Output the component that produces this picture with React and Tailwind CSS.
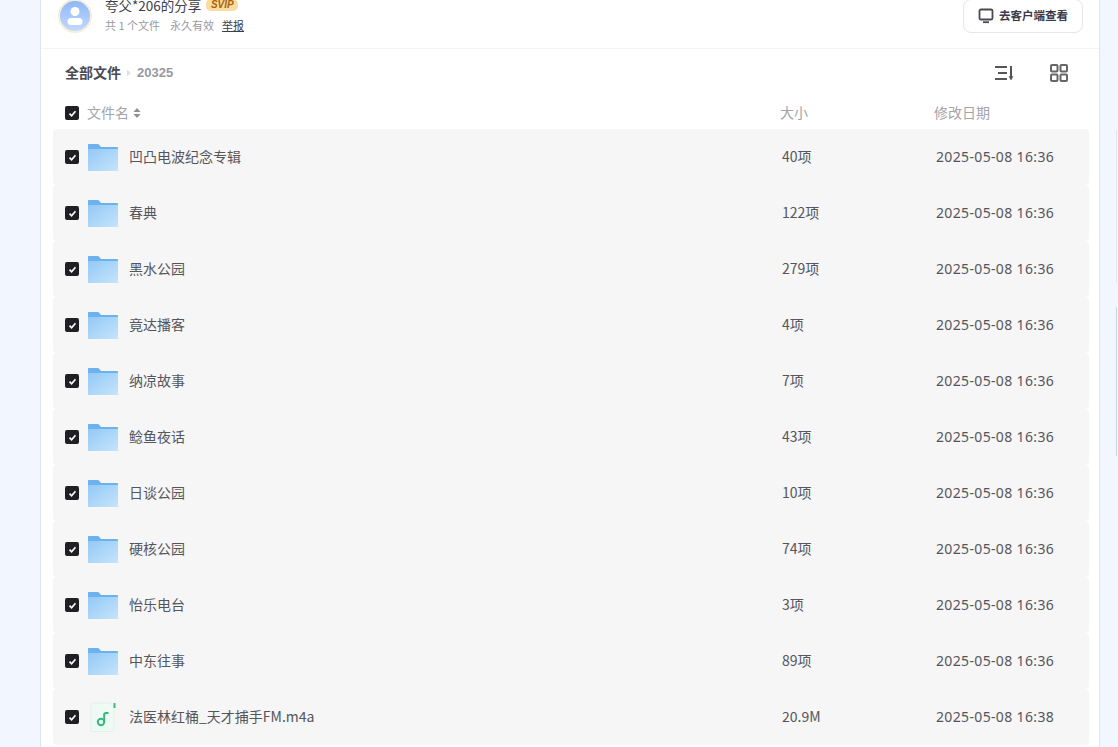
import React from "react";

const rows = [
  ["凹凸电波纪念专辑", "40项", "2025-05-08 16:36"],
  ["春典", "122项", "2025-05-08 16:36"],
  ["黑水公园", "279项", "2025-05-08 16:36"],
  ["竟达播客", "4项", "2025-05-08 16:36"],
  ["纳凉故事", "7项", "2025-05-08 16:36"],
  ["鲶鱼夜话", "43项", "2025-05-08 16:36"],
  ["日谈公园", "10项", "2025-05-08 16:36"],
  ["硬核公园", "74项", "2025-05-08 16:36"],
  ["怡乐电台", "3项", "2025-05-08 16:36"],
  ["中东往事", "89项", "2025-05-08 16:36"],
  ["法医林红桶_天才捕手FM.m4a", "20.9M", "2025-05-08 16:38", true],
];

function Check() {
  return (
    <span className="flex h-[14px] w-[14px] shrink-0 items-center justify-center rounded-[2px] bg-[#1f1f24]">
      <svg width="9" height="9" viewBox="0 0 9 9" fill="none">
        <path d="M1.500 4.700 3.600 6.800 7.500 2.200" stroke="#fff" strokeWidth="1.700" />
      </svg>
    </span>
  );
}

function Folder() {
  return (
    <svg width="30" height="27" viewBox="0 0 30 27" className="shrink-0">
      <defs>
        <linearGradient id="fg" x1="0" y1="0" x2="1" y2="1">
          <stop offset="0" stopColor="#93c9f5" />
          <stop offset="1" stopColor="#c6e4fc" />
        </linearGradient>
      </defs>
      <path d="M0 1C0 .4.4 0 1 0H9.500C10.500 0 11 .5 11.800 1.500L13 3H29C29.600 3 30 3.400 30 4V26C30 26.600 29.600 27 29 27H1C.4 27 0 26.600 0 26Z" fill="#6cb2ec" />
      <path d="M0 6C0 5.400.4 5 1 5H29C29.600 5 30 5.400 30 6V26C30 26.600 29.600 27 29 27H1C.4 27 0 26.600 0 26Z" fill="url(#fg)" />
    </svg>
  );
}

function Music() {
  return (
    <svg width="30" height="32" viewBox="0 0 30 32" className="shrink-0">
      <path d="M3 3.500C3 2.700 3.700 2 4.500 2H22L26 6V29C26 29.800 25.300 30.500 24.500 30.500H4.500C3.700 30.500 3 29.800 3 29Z" fill="#eefaf4" stroke="#dff2e8" />
      <rect x="25.500" y="2" width="2" height="5" fill="#3dbb7f" />
      <circle cx="13" cy="21" r="3.200" fill="none" stroke="#36b87c" strokeWidth="2" />
      <path d="M16.200 21V13.500C16.200 12.500 17 12 18 12H20.500" fill="none" stroke="#36b87c" strokeWidth="2" />
    </svg>
  );
}

export default function App() {
  return (
    <div className="relative h-[747px] w-[1118px] overflow-hidden bg-[#f2f6ff] font-['Noto_Sans_CJK_SC','Noto_Sans',sans-serif]">
      <div className="ml-[40px] h-[747px] w-[1060px] border-x border-[#dfe5ef] bg-white">
        <header className="flex h-[49px] items-center justify-between border-b border-[#f3f3f3] pl-[17px] pr-[16px]">
          <div className="-mt-[17px] flex items-center gap-[13px]">
            <div className="flex h-[34px] w-[34px] items-center justify-center rounded-full border-2 border-[#f5eeda] bg-gradient-to-b from-[#8fb8f8] to-[#c4d9fd]">
              <svg width="18" height="20" viewBox="0 0 18 20">
                <circle cx="9" cy="5.500" r="4.500" fill="#fff" />
                <rect x="1.500" y="12" width="15" height="7" rx="3.500" fill="#fff" />
              </svg>
            </div>
            <div className="-mt-[3px]">
              <div className="flex h-[22px] items-center gap-[5px]">
                <span className="text-[13.5px] leading-[22px] text-[#40404a]">夸父*206的分享</span>
                <span className="flex h-[12px] w-[32px] items-center justify-center rounded-[5px] bg-[#fbdc9e] font-['Liberation_Sans',sans-serif] text-[10px] font-bold italic leading-none text-[#a8620f]">SVIP</span>
              </div>
              <div className="flex h-[18px] items-center text-[11px] text-[#9a9aa2]">
                <span>共 1 个文件</span>
                <span className="ml-[10px]">永久有效</span>
                <span className="ml-[8px] text-[#3d3d4a] underline">举报</span>
              </div>
            </div>
          </div>
          <button className="-mt-[16px] flex h-[34px] w-[120px] items-center justify-center gap-[5px] rounded-[8px] border border-[#e6e6ea] bg-white text-[11.500px] font-semibold text-[#3a3a48]">
            <svg width="16" height="16" viewBox="0 0 16 16" fill="none" stroke="#4a4a4f" strokeWidth="1.800">
              <rect x="1.500" y="1.500" width="13" height="10" rx="1.500" />
              <path d="M5 14.200H11" />
            </svg>
            去客户端查看
          </button>
        </header>

        <div className="flex h-[48px] items-center justify-between pl-[24px] pr-[31px]">
          <div className="flex items-center">
            <span className="relative -top-[1px] text-[14px] font-semibold text-[#4a4a52]">全部文件</span>
            <svg width="6" height="8" viewBox="0 0 6 8" className="mx-[5px]"><path d="M1 0.500 5 4 1 7.500Z" fill="#e2e2e4" /></svg>
            <span className="font-['Liberation_Sans',sans-serif] text-[13px] font-bold text-[#98989e]">20325</span>
          </div>
          <div className="flex items-center gap-[36px]">
            <svg width="20" height="18" viewBox="0 0 20 18" fill="none" stroke="#55555a" strokeWidth="2">
              <path d="M1 3H13M4 9H13M1 15H13" />
              <path d="M17 2V15" />
              <path d="M15 12.500 17 16 19 12.500Z" fill="#55555a" strokeWidth="0.500" />
            </svg>
            <svg width="18" height="18" viewBox="0 0 18 18" fill="none" stroke="#666" strokeWidth="2">
              <rect x="1" y="1" width="6.500" height="6.500" rx="1" />
              <rect x="10.500" y="1" width="6.500" height="6.500" rx="1" />
              <rect x="1" y="10.500" width="6.500" height="6.500" rx="1" />
              <rect x="10.500" y="10.500" width="6.500" height="6.500" rx="1" />
            </svg>
          </div>
        </div>

        <div className="flex h-[32px] items-center pl-[24px] text-[14px] text-[#a4a4aa]">
          <div className="flex w-[715px] items-center">
            <Check />
            <span className="relative -top-[1px] ml-[8px]">文件名</span>
            <svg width="8" height="10" viewBox="0 0 8 10" className="ml-[4px]" fill="#8d8d92">
              <path d="M4 0 7.500 4H.5Z" />
              <path d="M4 10 .5 6H7.500Z" />
            </svg>
          </div>
          <span className="relative -top-[1px] w-[154px]">大小</span>
          <span className="relative -top-[1px]">修改日期</span>
        </div>

        <div className="ml-[12px] mr-[10px]">
          {rows.map(([name, size, date, music], i) => (
            <div key={i} className="flex h-[56px] items-center rounded-[4px] bg-[#f6f6f6] pl-[12px] text-[14px] text-[#55555c]">
              <div className="flex w-[717px] items-center">
                <Check />
                <span className="ml-[9px] flex">
                  {music ? <Music /> : <Folder />}
                </span>
                <span className="relative -top-[1px] ml-[11px]">{name}</span>
              </div>
              <span className="relative -top-[1px] w-[154px]">{size}</span>
              <span className="relative -top-[1px] font-['Noto_Sans',sans-serif] tracking-[0.35px]">{date}</span>
            </div>
          ))}
        </div>
      </div>
      <span className="absolute left-[1116px] top-[130px] h-[153px] w-[1px] rounded-full bg-[#e3e6ee]" />
      <span className="absolute left-[1116px] top-[307px] h-[149px] w-[1px] rounded-full bg-[#bcd7f0]" />
    </div>
  );
}
